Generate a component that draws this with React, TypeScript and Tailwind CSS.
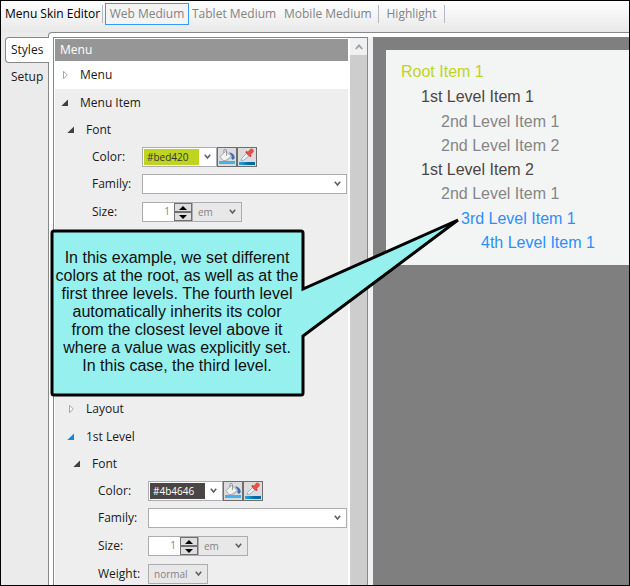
import type { ReactNode } from 'react';

const UI_FONT = "font-['Segoe_UI','Open_Sans','Noto_Sans',sans-serif]";
const MENU_FONT = "font-['Arial','Liberation_Sans',sans-serif]";

function Chevron() {
  return (
    <svg width="7" height="6" viewBox="0 0 7 6" className="pointer-events-none block" aria-hidden="true">
      <path d="M0.8 0.8L3.5 4L6.2 0.8" fill="none" stroke="#606060" strokeWidth="1.6" />
    </svg>
  );
}

function Separator() {
  return <div className="h-[18px] w-px bg-[#b4b9c3]" />;
}

type Marker = 'closed' | 'open' | 'active';

function TreeMarker({ kind }: { kind: Marker }) {
  return (
    <svg width="8" height="8" viewBox="0 0 8 8" className="block shrink-0" aria-hidden="true">
      {kind === 'closed' ? (
        <path d="M2.5 0.3V7.7L6.3 4Z" fill="#fff" stroke="#a6a6a6" />
      ) : (
        <path d="M7 0.5V7H0.3Z" fill={kind === 'active' ? '#0d8bd9' : '#404040'} />
      )}
    </svg>
  );
}

function TreeRow({ label, kind, className = 'h-7' }: { label: string; kind: Marker; className?: string }) {
  return (
    <button type="button" className={`flex w-full items-center gap-[11px] pl-[6px] text-left ${className}`}>
      <TreeMarker kind={kind} />
      {label}
    </button>
  );
}

function Field({ id, label, className = 'h-7', children }: { id: string; label: string; className?: string; children: ReactNode }) {
  return (
    <div className={`flex items-center pr-px pl-[25px] ${className}`}>
      <label htmlFor={id} className="w-[50px] shrink-0">
        {label}
      </label>
      {children}
    </div>
  );
}

function BucketIcon() {
  return (
    <svg width="18" height="18" viewBox="0 0 18 18" className="block" aria-hidden="true">
      <path d="M11 4.500C14.500 4.500 17 7 16.600 10C16.200 12 13.800 12.200 13.500 10.500L13 7Z" fill="#3f6bb8" />
      <path d="M2 8.500L7.500 3.500L13.500 8L9 12.500H5Z" fill="#f2f2f2" stroke="#a3a6aa" strokeWidth="0.9" />
      <path d="M7 12.300L13.300 8L13.500 9.500L10 12.500Z" fill="#b9bcc2" />
      <path d="M8.500 8V2.500C8.500 1 5.800 1 5.800 2.500V5" fill="none" stroke="#8f9398" strokeWidth="0.9" />
      <rect x="1" y="13" width="16" height="3" fill="#43b2ec" />
    </svg>
  );
}

function DropperIcon({ id }: { id: string }) {
  return (
    <svg width="18" height="18" viewBox="0 0 18 18" className="block" aria-hidden="true">
      <defs>
        <linearGradient id={id}>
          <stop offset="0" stopColor="#2aa5e0" />
          <stop offset="0.6" stopColor="#006ba3" />
        </linearGradient>
      </defs>
      <path d="M9 5L11.500 7.500L6 12L3 12.800L3.800 10.200Z" fill="#eaf3fa" stroke="#93a6b8" strokeWidth="0.8" />
      <path d="M8 3.500L13 8.500" stroke="#c93a36" strokeWidth="2" />
      <path d="M11 5.500L13.500 3" stroke="#e4504c" strokeWidth="4.500" strokeLinecap="round" />
      <rect x="1" y="14" width="16" height="3" fill={`url(#${id})`} />
    </svg>
  );
}

function ColorField({ id, value, swatch }: { id: string; value: string; swatch: string }) {
  return (
    <Field id={id} label="Color:" className="h-[27px]">
      <div className="flex h-5 w-[75px] items-center border border-[#abadb3] bg-white pl-px">
        <input id={id} defaultValue={value} className={`h-4 w-[55px] pl-[3px] text-[10px] outline-none ${swatch}`} />
        <button type="button" aria-label="Choose color" className="flex h-4 flex-1 items-center justify-center">
          <Chevron />
        </button>
      </div>
      <button type="button" aria-label="Fill color" className="size-5 border border-[#6d6d6d] bg-[#dcdcdc]">
        <BucketIcon />
      </button>
      <button type="button" aria-label="Pick color" className="size-5 border border-[#6d6d6d] bg-[#dcdcdc]">
        <DropperIcon id={`${id}-bar`} />
      </button>
    </Field>
  );
}

function DropDown({ id, name, value, className }: { id?: string; name?: string; value: string; className: string }) {
  return (
    <div className={`relative h-5 ${className}`}>
      <select
        id={id}
        aria-label={name}
        defaultValue={value}
        className="block size-full appearance-none border border-[#abadb3] pl-[5px] text-[10px] leading-4 text-[#838383] outline-none"
      >
        <option>{value}</option>
      </select>
      <div className="pointer-events-none absolute inset-y-0 right-[6px] flex items-center">
        <Chevron />
      </div>
    </div>
  );
}

function SpinButton({ up }: { up: boolean }) {
  return (
    <button
      type="button"
      aria-label={up ? 'Increase' : 'Decrease'}
      className="flex flex-1 items-center justify-center border border-[#707070] bg-[#dedede]"
    >
      <svg width="8" height="4" viewBox="0 0 8 4" className="shrink-0" aria-hidden="true">
        <path d={up ? 'M0 4H8L4 0Z' : 'M0 0H8L4 4Z'} fill="#000" />
      </svg>
    </button>
  );
}

function SizeField({ id }: { id: string }) {
  return (
    <Field id={id} label="Size:">
      <div className="flex h-5 w-[50px] border border-r-0 border-[#abadb3] bg-white">
        <input id={id} defaultValue="1" className="w-[31px] pr-1 text-right text-[10px] text-[#838383] outline-none" />
        <div className="flex flex-1 flex-col">
          <SpinButton up />
          <SpinButton up={false} />
        </div>
      </div>
      <DropDown name="Unit" value="em" className="w-[50px] bg-[#e8e8e8]" />
    </Field>
  );
}

function StylesPanel() {
  return (
    <div className="flex min-h-0 flex-[0_0_315px] border-x border-t border-[#828790] bg-white pl-px">
      <div className="mt-px min-w-0 flex-1 overflow-hidden bg-[#eee]">
        <h2 className="flex h-[22px] items-center bg-[#969696] pl-[5px] text-white">Menu</h2>
        <div className="bg-white">
          <TreeRow label="Menu" kind="closed" />
        </div>
        <TreeRow label="Menu Item" kind="open" />
        <div className="pl-[6px]">
          <TreeRow label="Font" kind="open" className="h-[26px]" />
          <div className="pl-[6px]">
            <ColorField id="item-color" value="#bed420" swatch="bg-[#bed420] text-[#333]" />
            <Field id="item-family" label="Family:">
              <DropDown id="item-family" value="" className="flex-1 bg-white" />
            </Field>
            <SizeField id="item-size" />
          </div>
          <div className="h-[169px]" />
          <TreeRow label="Layout" kind="closed" />
          <TreeRow label="1st Level" kind="active" />
          <div className="pl-[6px]">
            <TreeRow label="Font" kind="open" className="h-[26px]" />
            <div className="pl-[6px]">
              <ColorField id="level-color" value="#4b4646" swatch="bg-[#4b4646] text-white" />
              <Field id="level-family" label="Family:">
                <DropDown id="level-family" value="" className="flex-1 bg-white" />
              </Field>
              <SizeField id="level-size" />
              <Field id="level-weight" label="Weight:">
                <DropDown id="level-weight" value="normal" className="w-[60px] bg-[#e8e8e8]" />
              </Field>
            </div>
          </div>
        </div>
      </div>
      <div className="ml-[2px] w-[17px] bg-[#cdcdcd]">
        <button type="button" aria-label="Scroll up" className="flex h-[17px] w-full items-center justify-center bg-[#f0f0f0]">
          <svg width="8" height="6" viewBox="0 0 8 6" aria-hidden="true">
            <path d="M0.8 5L4 1.4L7.2 5" fill="none" stroke="#a0a0a0" strokeWidth="1.8" />
          </svg>
        </button>
      </div>
    </div>
  );
}

function Preview() {
  return (
    <div className={`min-w-0 flex-1 bg-[#7f7f7f] pt-[13px] pl-[13px] text-base leading-6 ${MENU_FONT}`}>
      <ul className="h-[215px] bg-[#f3f5f4] pt-[10px] pl-[15px] whitespace-nowrap">
        <li className="text-[#bed420]">
          Root Item 1
          <ul className="pt-px pl-5 text-[#4b4646]">
            <li>
              1st Level Item 1
              <ul className="pt-px pl-5 text-[#858585]">
                <li>2nd Level Item 1</li>
                <li>2nd Level Item 2</li>
              </ul>
            </li>
            <li>
              1st Level Item 2
              <ul className="pl-5 text-[#858585]">
                <li>
                  2nd Level Item 1
                  <ul className="pt-px pl-5 text-[#2a8fff]">
                    <li>
                      3rd Level Item 1
                      <ul className="pl-5">
                        <li>4th Level Item 1</li>
                      </ul>
                    </li>
                  </ul>
                </li>
              </ul>
            </li>
          </ul>
        </li>
      </ul>
    </div>
  );
}

function Callout() {
  return (
    <div className="pointer-events-none absolute top-[229px] left-[49px] w-[254px]">
      <svg width="420" height="190" viewBox="0 0 420 190" className="absolute top-[-12px] left-0" aria-hidden="true">
        <path
          d="M4 13H251Q253 13 253 15V71L408 2L253 118V175Q253 177 251 177H4Q2 177 2 175V15Q2 13 4 13Z"
          fill="#96f0ee"
          stroke="#000"
          strokeWidth="3"
          strokeMiterlimit="2"
        />
      </svg>
      <p className={`relative pt-[19px] text-center text-base leading-[18px] whitespace-nowrap text-[#111] ${MENU_FONT}`}>
        In this example, we set different
        <br />
        colors at the root, as well as at the
        <br />
        first three levels. The fourth level
        <br />
        automatically inherits its color
        <br />
        from the closest level above it
        <br />
        where a value was explicitly set.
        <br />
        In this case, the third level.
      </p>
    </div>
  );
}

export default function App() {
  return (
    <div className={`relative flex h-screen flex-col overflow-hidden border border-black bg-[#ebebeb] text-xs text-[#1a1a1a] ${UI_FONT}`}>
      <header className="flex h-[31px] shrink-0 items-start bg-linear-to-b from-white to-[#e8e8e8] pt-px whitespace-nowrap text-[#838383]">
        <div className="flex h-[23px] items-center">
          <h1 className="w-[101px] pl-1 text-black">Menu Skin Editor</h1>
          <Separator />
          <button type="button" className="ml-[2px] h-[22px] w-[84px] border border-[#3399ff] bg-[#f4f4f4]">
            Web Medium
          </button>
          <button type="button" className="ml-[3px] w-[84px]">Tablet Medium</button>
          <button type="button" className="ml-[8px] w-[87px]">Mobile Medium</button>
          <div className="ml-[7px]">
            <Separator />
          </div>
          <button type="button" className="w-[65px]">Highlight</button>
          <Separator />
        </div>
      </header>
      <main className="flex min-h-0 flex-1">
        <nav className="z-10 flex w-[47px] shrink-0 flex-col pt-[5px] pl-1">
          <button type="button" className="-mr-px h-[26px] rounded-l border border-r-0 border-[#888] bg-white pl-[5px] text-left">
            Styles
          </button>
          <button type="button" className="h-7 pl-[6px] text-left">
            Setup
          </button>
        </nav>
        <div className="flex min-w-0 flex-1 rounded-tl border-t border-l border-[#888] bg-white pt-1 pl-1">
          <StylesPanel />
          <div className="w-[5px] shrink-0 bg-[#f0f0f2]" />
          <Preview />
        </div>
      </main>
      <Callout />
    </div>
  );
}
